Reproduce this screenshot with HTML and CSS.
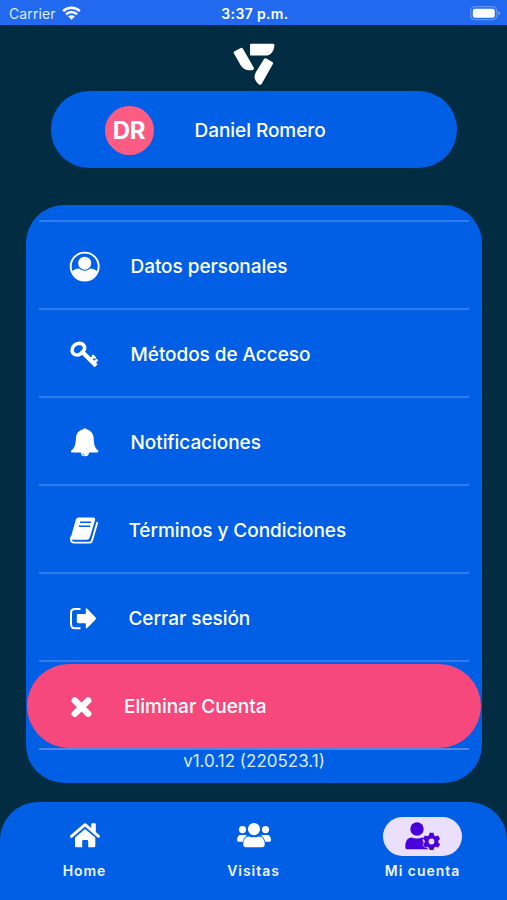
FILE: index.html
```html
<!DOCTYPE html>
<html lang="es">
<head>
<meta charset="utf-8">
<title>Mi cuenta</title>
<link rel="stylesheet" href="styles.css">
</head>
<body>
<div class="screen">
  <header class="status">
    <div class="carrier"><span>Carrier</span>
      <svg width="19" height="14" viewBox="0 0 19 14" fill="none" stroke="#fff" stroke-width="2.500"><path d="M1.200 5.200a11.800 11.800 0 0 1 16.600 0"/><path d="M4 8.300a7.800 7.800 0 0 1 11 0"/><path d="M6.200 10.500a4.700 4.700 0 0 1 6.600 0L9.500 13.800Z" fill="#fff" stroke="none"/></svg>
    </div>
    <div class="clock">3:37 p.m.</div>
    <div class="battery"><svg width="31" height="15" viewBox="0 0 31 15"><rect x=".7" y=".7" width="26" height="13" rx="4" fill="none" stroke="#fff" stroke-opacity=".3" stroke-width="1.200"/><rect x="2.800" y="2.700" width="22" height="9" rx="2" fill="#fff"/><path d="M28.300 5v4.400q1.800-.6 1.800-2.200T28.300 5Z" fill="#fff" opacity=".4"/></svg></div>
  </header>
  <div class="logo"><svg width="60" height="50" viewBox="0 0 60 50" fill="#fff"><path d="M26.200 3.800H48q1.400 0 1.400 1.400C49 11 46 15.600 40.500 15.600H26.200q-1.200 0-1.200-1.200V5q0-1.200 1.200-1.200Z"/><path d="M9.200 11.500l6.600-3.600q1.300-.6 2 .6L28.700 27.500q.9 2-.8 2.400C22 31 18.500 29.500 15.800 25.500L8.800 13.300q-.7-1.200.4-1.800Z"/><path d="M41.300 18.400l6 3.500q1.200.8.600 2L36.800 43.700q-1.200 1.800-2.900.7C29.600 40.700 28.300 37 30.700 32.600l8.300-13.700q.8-1.100 2.300-.5Z"/></svg></div>
  <section class="profile">
    <div class="avatar">DR</div>
    <div class="name">Daniel Romero</div>
  </section>
  <main class="panel">
    <ul class="menu">
      <li><a class="item"><svg class="icon" viewBox="0 0 32 32"><circle cx="15.700" cy="16.600" r="14" fill="none" stroke="#fff" stroke-width="1.900"/><circle cx="15.700" cy="13.200" r="6.500" fill="#fff"/><path d="M2.700 22.300C4.300 19.800 7 18.600 10 18.600q5.700 4.400 11.400 0c3 0 5.700 1.200 7.300 3.700a14.500 14.500 0 0 1-26 0Z" fill="#fff"/></svg><span>Datos personales</span></a></li>
      <li><a class="item"><svg class="icon" viewBox="0 0 32 32" fill="none" stroke="#fff"><path d="M3.100 12.500C2.800 8.800 6.300 5.300 10.300 5.200c4.300 0 6.700 4 4.500 7.300L11.500 15.800C8 18.200 3.300 16.700 3.100 12.500Z" stroke-width="3.500"/><path d="M13.700 14.400 27.200 27.700" stroke-width="4.300"/><path d="m21.200 22 3.700-3.700M24.800 25l3.500-3.500" stroke-width="2.500"/><path d="m23.300 17 3.200 3.200" stroke-width="2.200"/></svg><span>Métodos de Acceso</span></a></li>
      <li><a class="item"><svg class="icon" viewBox="0 0 32 32" fill="#fff"><path d="M14.200 3.300a1.700 1.700 0 0 1 3.200 0C22 4.300 24.500 8.100 24.700 12.500c.2 6 1.200 9.800 4.400 12 .8.600.3 2-.8 2H3c-1.100 0-1.400-1.400-.6-2C5.600 22.300 6.700 18.500 6.900 12.500c.2-4.400 2.700-8.200 7.300-9.200Z"/><path d="M11.800 26H20a4.100 4.100 0 0 1-8.200 0.500Z"/><path d="M13 27.100a3 3 0 0 0 2.700 2" fill="none" stroke="#1265e5" stroke-width=".7"/></svg><span>Notificaciones</span></a></li>
      <li><a class="item"><svg class="icon" viewBox="0 0 32 32"><path d="M28.200 8.800 23 26.400q-.7 2.200-3 2.200H5.200q-3 0-3.100-2.600L2 23.500" fill="none" stroke="#fff" stroke-width="1.900" stroke-linecap="round"/><path d="M9.500 3.400h14.300q3 0 2.200 2.800L20.800 23.400q-.7 2.300-3 2.300H4.500q-3.200 0-2.500-2.900L6.800 5.700q.6-2.300 2.700-2.300Z" fill="#fff"/><path d="M11 8.300h11.200M9.900 12.300h11.200" stroke="#005fe5" stroke-width="1.500"/></svg><span class="near">Términos y Condiciones</span></a></li>
      <li><a class="item"><svg class="icon" viewBox="0 0 32 32"><path d="M11.500 7H6q-4 0-4 4v11.300q0 4 4 4h5.500" fill="none" stroke="#fff" stroke-width="2"/><path d="M9.200 11.900h7.600V7.300q0-1.700 1.400-.6l8.400 8.700q1 1 0 2l-8.400 8.700q-1.400 1.200-1.400-.6v-4.300H9.200q-1.400 0-1.400-1.400v-6.500q0-1.400 1.400-1.400Z" fill="#fff"/></svg><span class="near">Cerrar sesión</span></a></li>
      <li><a class="item danger"><svg class="icon" viewBox="0 0 32 32"><path d="m5.800 10.500 13.400 13.300M19.200 10.500 5.800 23.800" fill="none" stroke="#fff" stroke-width="6.400" stroke-linecap="round"/></svg><span>Eliminar Cuenta</span></a></li>
    </ul>
    <div class="version"><span>v1.0.12 (220523.1)</span></div>
  </main>
  <nav class="tabs">
    <a class="tab"><span class="chip"><svg width="32" height="28" viewBox="0 0 32 28" fill="#fff"><path d="m2.400 16.400 13.700-11.700 13.500 11.700" fill="none" stroke="#fff" stroke-width="2.900" stroke-linecap="round" stroke-linejoin="round"/><path d="M22.200 4.200q0-1 1-1h2.600q1 0 1 1v9l-4.600-4Z"/><path d="M16 8.900 26.300 17.500V26q0 1.300-1.300 1.300h-5.800v-6q0-1.300-1.200-1.300h-3.600q-1.200 0-1.200 1.300v6H7.300Q6 27.300 6 26v-8.500Z"/></svg></span><span class="label">Home</span></a>
    <a class="tab"><span class="chip"><svg width="36" height="28" viewBox="0 0 36 28" fill="#fff"><circle cx="18" cy="9.100" r="6.100"/><circle cx="6.500" cy="9.600" r="3.600"/><circle cx="29.500" cy="9.600" r="3.600"/><path d="M4.700 15h4q1.200 0 2.400.6-3.500 2-4.200 6.100H2.500Q1 21.700 1 20.200C1 17 2.400 15 4.700 15ZM31.300 15h-4q-1.200 0-2.400.6 3.500 2 4.200 6.100h4.400q1.500 0 1.500-1.500c0-3.200-1.400-5.200-3.700-5.200Z"/><path d="M13 16.400q5 1.800 10 0c3.600 0 5.700 3.200 5.700 8.200q0 2.700-2.700 2.700H10q-2.700 0-2.700-2.700c0-5 2.100-8.200 5.700-8.200Z"/></svg></span><span class="label">Visitas</span></a>
    <a class="tab"><span class="chip active"><svg width="36" height="30" viewBox="0 0 36 30" fill="#4a00dc"><circle cx="13" cy="8" r="6.700"/><path d="M7.500 16.500q5.500 1.800 10.800 0l1.200.2-1.100 2.200 1.300 2.400-1.300 2.700 2.200 2.500 2.800.2.200 1.600H3.200q-1.900 0-1.900-2.200c0-6 2.200-9.600 6.200-9.600Z"/><path d="m25.500 11.800-.5 2.500-1.800 1-2.300-.8-2 3.300 1.800 1.700v2.100l-1.800 1.700 2 3.300 2.300-.8 1.800 1 .5 2.300h4l.5-2.300 1.800-1 2.300.8 2-3.300-1.800-1.700v-2.100l1.800-1.700-2-3.300-2.300.8-1.800-1-.5-2.500Z"/><circle cx="27.500" cy="20.500" r="2.900" fill="#eadffc"/></svg></span><span class="label">Mi cuenta</span></a>
  </nav>
</div>
</body>
</html>
```
FILE: styles.css
```css
* { box-sizing: border-box; }
body { margin: 0; background: #022c41; font-family: Inter, "Liberation Sans", sans-serif; color: #fff; }
.screen { width: 507px; height: 900px; display: flex; flex-direction: column; overflow: hidden; }
svg { display: block; flex: none; }
.status { height: 25px; flex: none; background: #216af0; display: grid; grid-template-columns: 1fr auto 1fr; align-items: center; padding: 2px 6px 0 9px; }
.carrier { display: flex; align-items: center; gap: 6px; font-size: 14px; letter-spacing: .1px; color: #dfeaff; }
.carrier svg { margin-top: -2px; }
.clock { font-size: 14px; font-weight: 600; letter-spacing: .35px; }
.battery { justify-self: end; }
.logo { height: 66px; flex: none; display: flex; justify-content: center; padding: 15px 0 0 2px; }
.logo svg { margin-top: -.5px; }
.profile { width: 406px; height: 77px; flex: none; margin: 0 0 0 51px; border-radius: 38px; background: #005fe5; display: flex; align-items: center; padding: 1px 0 0 53.5px; }
.avatar { width: 49px; height: 49px; border-radius: 50%; background: #fc5c84; font-size: 24px; font-weight: 700; display: flex; align-items: center; justify-content: center; letter-spacing: -.3px; }
.name { margin-left: 41px; font-size: 19px; font-weight: 500; letter-spacing: -.05px; white-space: nowrap; }
.panel { width: 456px; height: 578px; flex: none; margin: 37px 0 0 26px; border-radius: 38px; background: #005fe5; padding-top: 15px; }
.menu { list-style: none; margin: 0; padding: 0; }
.menu li { position: relative; height: 88px; padding: 4px 1px 0; }
.menu li::before { content: ""; position: absolute; left: 13px; right: 13px; top: 0; height: 2px; background: #347ceb; }
.item { height: 84px; display: flex; align-items: center; padding-left: 42px; font-size: 19px; font-weight: 500; letter-spacing: -.06px; white-space: nowrap; }
.item span { padding-top: 1px; }
.icon { width: 32px; height: 32px; margin-right: 29.5px; }
.danger { border-radius: 42px; background: #f6487d; letter-spacing: 0; }
.danger .icon { margin-right: 23px; }
.near { margin-left: -2px; }
.version { position: relative; text-align: center; font-size: 17px; line-height: 23px; padding-top: 2px; color: #dceaff; }
.version::before { content: ""; position: absolute; left: 13px; right: 13px; top: 0; height: 2px; background: #5285e5; }
.tabs { height: 98px; flex: none; margin-top: 19px; background: #005fe5; border-radius: 38px 38px 0 0; display: grid; grid-template-columns: repeat(3, 1fr); }
.tab { display: flex; flex-direction: column; align-items: center; padding-top: 15px; }
.chip { width: 79px; height: 39px; border-radius: 20px; display: flex; align-items: center; justify-content: center; }
.chip svg { margin-top: -5px; }
.active { background: #eadffc; }
.active svg { margin: -1px 2px 0 0; }
.label { margin-top: 6px; font-size: 14px; line-height: 18px; font-weight: 600; letter-spacing: .95px; color: #edf4ff; }
```
